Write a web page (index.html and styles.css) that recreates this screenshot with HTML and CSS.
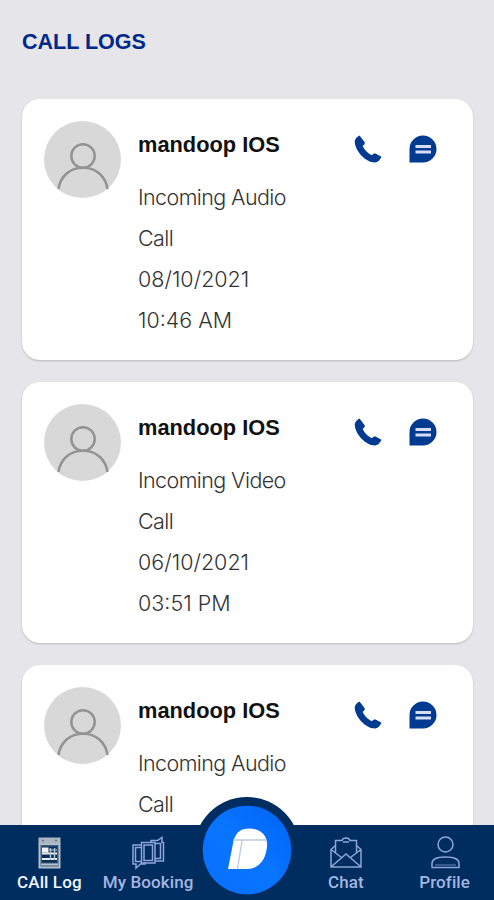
FILE: index.html
```html
<!DOCTYPE html>
<html lang="en">

<head>
    <meta charset="UTF-8">
    <meta name="viewport" content="width=device-width, initial-scale=1.0">
    <title>Call Logs</title>
    <link rel="stylesheet" href="styles.css">
</head>

<body>
    <!-- shared icons -->
    <svg class="sprite" aria-hidden="true">
        <symbol id="avatar" viewBox="0 0 77 77">
            <circle cx="38.5" cy="38.5" r="38.5" fill="#d8d8d8" />
            <g fill="none" stroke="#939393" stroke-width="2.5">
                <circle cx="39" cy="35" r="11.7" />
                <path d="M14.500 68C16.500 55 26 46.800 39 46.800S61.500 55 63.500 68" />
            </g>
        </symbol>
        <symbol id="phone" viewBox="0 0 28 28">
            <path d="M5.500.500C3.500 1.500.500 4 .800 7.500 1.500 16 11.500 27.500 21 27.500c2.500 0 5-2.500 6.500-5.800l-5.500-3c-1.500-.700-3 0-4 1.500-4-1.700-8-5.700-9.300-9.400 1.500-.800 2.500-2 2-3.500z" />
        </symbol>
        <symbol id="message" viewBox="0 0 28 28">
            <path d="M14 .500A13.500 13.500 0 1 1 14 27.500H.500V14A13.500 13.500 0 0 1 14 .500z" />
            <path d="M6.500 11.500h15.500M6.500 17h15.500" stroke="#d8dcf5" stroke-width="2.800" />
        </symbol>
    </svg>

    <div class="screen">
        <h1 class="title">CALL LOGS</h1>
        <ul class="list">
            <li class="card">
                <svg class="avatar"><use href="#avatar" /></svg>
                <div class="info">
                    <h2>mandoop IOS</h2>
                    <p>Incoming Audio<br>Call</p>
                    <p class="time">08/10/2021</p>
                    <p class="time">10:46 AM</p>
                </div>
                <div class="actions">
                    <svg><use href="#phone" /></svg>
                    <svg><use href="#message" /></svg>
                </div>
            </li>
            <li class="card">
                <svg class="avatar"><use href="#avatar" /></svg>
                <div class="info">
                    <h2>mandoop IOS</h2>
                    <p>Incoming Video<br>Call</p>
                    <p class="time">06/10/2021</p>
                    <p class="time">03:51 PM</p>
                </div>
                <div class="actions">
                    <svg><use href="#phone" /></svg>
                    <svg><use href="#message" /></svg>
                </div>
            </li>
            <li class="card">
                <svg class="avatar"><use href="#avatar" /></svg>
                <div class="info">
                    <h2>mandoop IOS</h2>
                    <p>Incoming Audio<br>Call</p>
                </div>
                <div class="actions">
                    <svg><use href="#phone" /></svg>
                    <svg><use href="#message" /></svg>
                </div>
            </li>
        </ul>

        <nav class="tabs">
            <a class="tab active">
                <svg viewBox="0 0 34 34">
                    <path d="M7.500 8h20v23.500h-20z" fill="#3d5f7f" stroke="#b3c0cb" stroke-width="2" />
                    <path d="M6.500 1.500h22v6h-22z" fill="#aab6c0" />
                    <path d="M10 4.500h2M23 4.500h2" stroke="#5d7488" stroke-width="1.500" />
                    <path d="M10 10.500h15v16H10z" fill="#082f5b" />
                    <path d="M10 11.500h6.500v5H10z" fill="#eef2f6" />
                    <path d="M10 17.500h15M10 23h15" stroke="#eef2f6" stroke-width="1.800" />
                    <path d="M17 14h8" stroke="#aebfce" stroke-width="1.200" />
                    <path d="M18.500 12v12M22.500 12v12" stroke="#aebfce" />
                    <path d="M9 28.500h17" stroke="#b3c0cb" stroke-width="2" />
                </svg>
                <span>CAll Log</span>
            </a>
            <a class="tab">
                <svg viewBox="0 0 34 34">
                    <path d="M10.500 6.500h13.500v20.500H10.500zM13 9h8.500v15.500H13z" />
                    <path d="M10.500 9H2v19h3v4l4.500-4h4.500v-2M10.500 11.500H4.500V25.500h6" />
                    <path d="M20 6.500V4.500h6.500L31 1.500v5h1.500V25H24M24 7.500h5.500v15H24" />
                </svg>
                <span>My Booking</span>
            </a>
            <a class="home">
                <svg viewBox="0 0 90 90">
                    <defs>
                        <linearGradient id="blue" x1="1" y1="0" x2="0" y2="1">
                            <stop offset="0" stop-color="#0063f4" />
                            <stop offset=".5" stop-color="#0875ff" />
                            <stop offset="1" stop-color="#0870ff" />
                        </linearGradient>
                    </defs>
                    <circle cx="45" cy="45" r="44.300" fill="url(#blue)" />
                    <path d="M26 64L31.500 36C34 27 39 23.500 47 23.500c12 0 19 7 18 18C64 54 57 64 45 64z" fill="#fff" />
                    <path d="M31 35h33M40 35.500L35.500 64" fill="none" stroke="#b9c9df" stroke-width="1.300" />
                </svg>
            </a>
            <a class="tab">
                <svg viewBox="0 0 34 34">
                    <path d="M6.500 17V4.500h6.500c1-3.500 7-3.500 8 0h6.500V17M14 6h6" />
                    <path d="M6.500 9.500L2 13.500v17.500h30V13.500L27.500 9.500M2 13.500L12.500 21.500M32 13.500L21.500 21.500M2.500 30.500L17 18 31.500 30.500" />
                </svg>
                <span>Chat</span>
            </a>
            <a class="tab">
                <svg viewBox="0 0 34 34">
                    <circle cx="17.500" cy="8.500" r="7.500" />
                    <path d="M4 31.500v-4C4 23.500 8 21 17.500 21S31 23.500 31 27.500v4z" />
                    <path d="M7 29h21" opacity=".5" />
                </svg>
                <span>Profile</span>
            </a>
        </nav>
    </div>
</body>

</html>
```

FILE: styles.css
```css
* {
    margin: 0;
    padding: 0;
    box-sizing: border-box;
}

body {
    font-family: "Liberation Sans", Arial, sans-serif;
    background: #e5e5ea;
}

.sprite {
    display: none;
}

.screen {
    display: flex;
    flex-direction: column;
    height: 900px;
    overflow: hidden;
}

.title {
    flex: none;
    height: 99px;
    padding: 29px 22px 0;
    font-size: 21.5px;
    line-height: 26px;
    color: #00288a;
}

/* call list */
.list {
    flex: 1;
    min-height: 0;
    display: flex;
    flex-direction: column;
    gap: 22px;
    padding: 0 21px 0 22px;
    overflow: hidden;
    list-style: none;
}

.card {
    flex: none;
    display: flex;
    height: 261px;
    padding: 22px 36px 0 22px;
    border-radius: 18px;
    background: #fff;
    box-shadow: 0 1px 2px rgba(0, 0, 0, 0.2);
}

.avatar {
    flex: none;
    width: 77px;
    height: 77px;
}

.info {
    flex: 1;
    padding: 11px 0 0 17px;
}

.info h2 {
    margin-bottom: 19px;
    font-size: 21.8px;
    line-height: 26px;
    color: #111;
}

.info p {
    font-family: Inter, "Liberation Sans", sans-serif;
    font-size: 21.5px;
    font-weight: 300;
    line-height: 41px;
    letter-spacing: -0.6px;
    color: #333;
}

.info .time {
    letter-spacing: 0;
}

.actions {
    display: flex;
    gap: 27px;
    padding-top: 14px;
}

.actions svg {
    width: 28px;
    height: 28px;
    fill: #003a91;
}

/* bottom tabs */
.tabs {
    flex: none;
    display: flex;
    height: 75px;
    background: #002d5f;
}

.tab {
    flex: 1;
    display: flex;
    flex-direction: column;
    align-items: center;
    padding-top: 11px;
    font-family: Roboto, sans-serif;
    font-size: 17px;
    font-weight: 500;
    line-height: 20px;
    letter-spacing: 0.1px;
    white-space: nowrap;
    color: #a4b5e0;
}

.tab svg {
    width: 34px;
    height: 34px;
    margin-bottom: 2px;
    fill: none;
    stroke: #8fa5d8;
    stroke-width: 1.5;
}

.tab.active {
    color: #f2f5fa;
}

.tab.active svg {
    stroke: none;
}

.home {
    flex: none;
    align-self: flex-start;
    width: 106px;
    height: 106px;
    margin: -28px -3.5px 0;
    padding: 8px;
    border-radius: 50%;
    background: #002d5f;
}

.home svg {
    display: block;
    width: 90px;
    height: 90px;
}
```
